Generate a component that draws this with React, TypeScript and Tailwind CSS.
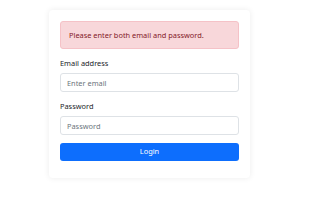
export default function App() {
  return (
    <div className="min-h-[212px] bg-white pt-[10px] pl-[49px] font-['Noto_Sans',sans-serif]">
      <div className="w-[201px] rounded-[4px] bg-white px-[11px] pt-[11px] pb-[17px] shadow-[0_0_6px_rgba(0,0,0,0.08)]">
        <div className="mb-[8px] flex h-[28px] items-center rounded-[3px] border border-[#f5c2c7] bg-[#f8d7da] px-[8px] pt-[1px] text-[7.4px] text-[#842029]">
          Please enter both email and password.
        </div>
        <div className="mb-[8px]">
          <label className="mb-[4px] block pt-[1px] text-[7.4px] leading-[11px] text-[#212529]">Email address</label>
          <input
            type="email"
            placeholder="Enter email"
            className="block h-[19px] w-full rounded-[3px] border border-[#dee2e6] px-[6px] text-[7.4px] text-[#212529] placeholder:text-[#6c757d] outline-none"
          />
        </div>
        <div className="mb-[8px]">
          <label className="mb-[4px] block pt-[1px] text-[7.4px] leading-[11px] text-[#212529]">Password</label>
          <input
            type="password"
            placeholder="Password"
            className="block h-[19px] w-full rounded-[3px] border border-[#dee2e6] px-[6px] text-[7.4px] text-[#212529] placeholder:text-[#6c757d] outline-none"
          />
        </div>
        <button className="block h-[18px] w-full rounded-[3px] bg-[#0d6efd] text-[7.4px] text-white">
          Login
        </button>
      </div>
    </div>
  )
}
